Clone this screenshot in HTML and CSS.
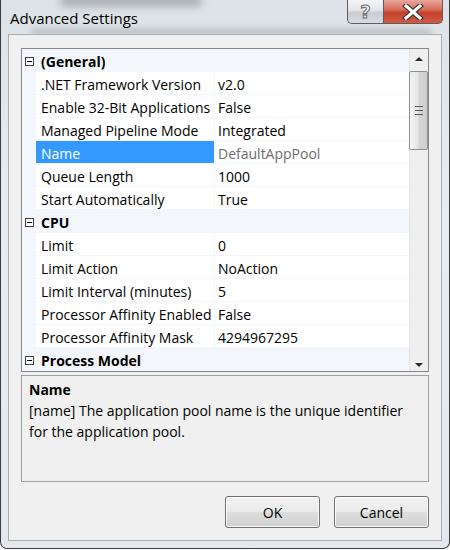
FILE: index.html
```html
<!DOCTYPE html>
<html lang="en">

<head>
    <meta charset="UTF-8">
    <title>Advanced Settings</title>
    <link rel="stylesheet" href="styles.css">
</head>

<body>

    <div class="window">
        <div class="titlebar">
            <span class="title">Advanced Settings</span>
            <div class="caption-buttons">
                <div class="cap-btn help"><span>?</span></div>
                <div class="cap-btn close">
                    <svg width="22" height="16" viewBox="0 0 22 16">
                        <path d="M4 2 L18 14 M18 2 L4 14" stroke="#3a3a3a" stroke-width="5.5" stroke-linecap="square" fill="none" />
                        <path d="M4 2 L18 14 M18 2 L4 14" stroke="#ffffff" stroke-width="3" stroke-linecap="square" fill="none" />
                    </svg>
                </div>
            </div>
        </div>

        <div class="client">
            <div class="grid">
                <div class="rows">
                    <div class="row cat"><span class="gutter"><span class="toggle"></span></span><span class="cat-label">(General)</span></div>
                    <div class="row"><span class="gutter"></span><span class="name">.NET Framework Version</span><span class="value">v2.0</span></div>
                    <div class="row"><span class="gutter"></span><span class="name">Enable 32-Bit Applications</span><span class="value">False</span></div>
                    <div class="row"><span class="gutter"></span><span class="name">Managed Pipeline Mode</span><span class="value">Integrated</span></div>
                    <div class="row selected"><span class="gutter"></span><span class="name">Name</span><span class="value readonly">DefaultAppPool</span></div>
                    <div class="row"><span class="gutter"></span><span class="name">Queue Length</span><span class="value">1000</span></div>
                    <div class="row"><span class="gutter"></span><span class="name">Start Automatically</span><span class="value">True</span></div>
                    <div class="row cat"><span class="gutter"><span class="toggle"></span></span><span class="cat-label">CPU</span></div>
                    <div class="row"><span class="gutter"></span><span class="name">Limit</span><span class="value">0</span></div>
                    <div class="row"><span class="gutter"></span><span class="name">Limit Action</span><span class="value">NoAction</span></div>
                    <div class="row"><span class="gutter"></span><span class="name">Limit Interval (minutes)</span><span class="value">5</span></div>
                    <div class="row"><span class="gutter"></span><span class="name">Processor Affinity Enabled</span><span class="value">False</span></div>
                    <div class="row"><span class="gutter"></span><span class="name">Processor Affinity Mask</span><span class="value">4294967295</span></div>
                    <div class="row cat"><span class="gutter"><span class="toggle"></span></span><span class="cat-label">Process Model</span></div>
                </div>
                <div class="scrollbar">
                    <div class="arrow up"></div>
                    <div class="track">
                        <div class="thumb"><span class="grip"></span></div>
                    </div>
                    <div class="arrow down"></div>
                </div>
            </div>

            <div class="desc">
                <div class="desc-title">Name</div>
                <div class="desc-text">[name] The application pool name is the unique identifier<br>for the application pool.</div>
            </div>

            <div class="buttons">
                <button>OK</button>
                <button>Cancel</button>
            </div>
        </div>
    </div>

</body>

</html>
```

FILE: styles.css
```css
body {
    margin: 0;
    background-color: #ffffff;
    font-family: "Open Sans", "Noto Sans", sans-serif;
    font-size: 14px;
    color: #000;
}

.window {
    position: relative;
    width: 450px;
    height: 549px;
    box-sizing: border-box;
    border: 1px solid #3c3c3c;
    border-top: none;
    border-radius: 0 0 7px 7px;
    background: linear-gradient(180deg, #dde2e7 0%, #e9ecef 40%, #e4e8ec 100%);
    display: flex;
    flex-direction: column;
    overflow: hidden;
}

/* blurred desktop showing through the glass */
.window::before {
    content: "";
    position: absolute;
    left: 60px;
    top: -4px;
    width: 140px;
    height: 10px;
    background: #7d8288;
    filter: blur(4px);
    opacity: 0.6;
}

.window::after {
    content: "";
    position: absolute;
    left: 30px;
    top: 29px;
    width: 400px;
    height: 6px;
    background: #8d9298;
    filter: blur(3px);
    opacity: 0.5;
}

.titlebar {
    position: relative;
    z-index: 1;
    height: 34px;
    display: flex;
    justify-content: space-between;
    align-items: flex-start;
}

.title {
    font-size: 15px;
    padding-left: 9px;
    line-height: 37px;
    color: #000;
}

.caption-buttons {
    display: flex;
    margin-right: 6px;
}

.cap-btn {
    height: 24px;
    box-sizing: border-box;
    border: 1px solid #5c5c5c;
    border-top: none;
    display: flex;
    align-items: center;
    justify-content: center;
}

.help {
    width: 36px;
    border-right: none;
    border-radius: 0 0 0 5px;
    background: linear-gradient(180deg, #f4f5f6 0%, #e2e4e6 45%, #c9ccd0 55%, #d9dcdf 100%);
}

.help span {
    font-family: "DejaVu Sans", sans-serif;
    font-size: 18px;
    font-weight: bold;
    color: #f4f4f4;
    -webkit-text-stroke: 1px #6a6a6a;
    line-height: 22px;
}

.close {
    width: 60px;
    border-radius: 0 0 5px 0;
    background: linear-gradient(180deg, #e8a89c 0%, #d8705f 40%, #c7402b 55%, #d25a43 100%);
}

.client {
    position: relative;
    z-index: 1;
    margin: 0 7px;
    height: 507px;
    box-sizing: border-box;
    border: 1px solid #a9aeb4;
    background-color: #f0f0f0;
    padding: 13px 12px 0 12px;
}

.grid {
    height: 324px;
    box-sizing: border-box;
    border: 1px solid #828790;
    display: flex;
    background-color: #fff;
}

.rows {
    flex: 1;
    display: flex;
    flex-direction: column;
    overflow: hidden;
}

.row {
    display: flex;
    height: 22px;
    border-bottom: 1px solid #f3f6fb;
    line-height: 25px;
    white-space: nowrap;
}

.gutter {
    width: 14px;
    flex-shrink: 0;
    background-color: #f3f6fb;
    position: relative;
}

.name {
    width: 173px;
    flex-shrink: 0;
    padding-left: 5px;
    border-right: 1px solid #f3f6fb;
    overflow: hidden;
}

.value {
    flex: 1;
    padding-left: 3px;
    overflow: hidden;
}

.readonly {
    color: #6d6d6d;
}

.selected .name {
    background-color: #3399ff;
    color: #fff;
}

.cat {
    background-color: #f3f6fb;
}

.cat-label {
    font-weight: bold;
    padding-left: 5px;
    overflow: hidden;
}

.toggle {
    position: absolute;
    left: 3px;
    top: 8px;
    width: 7px;
    height: 7px;
    border: 1px solid #444;
    background-color: #fff;
}

.toggle::after {
    content: "";
    position: absolute;
    left: 1px;
    top: 3px;
    width: 5px;
    height: 1px;
    background-color: #000;
}

.scrollbar {
    width: 19px;
    flex-shrink: 0;
    background-color: #efefef;
    border-left: 1px solid #e4e4e4;
    box-sizing: border-box;
    display: flex;
    flex-direction: column;
}

.arrow {
    height: 18px;
    display: flex;
    align-items: center;
    justify-content: center;
}

.arrow::after {
    content: "";
    width: 0;
    height: 0;
    border-left: 4px solid transparent;
    border-right: 4px solid transparent;
}

.up::after {
    border-bottom: 4px solid #2a2a2a;
    margin-top: 1px;
}

.down::after {
    border-top: 4px solid #2a2a2a;
    margin-top: 5px;
}

.track {
    flex: 1;
    padding-top: 4px;
}

.thumb {
    height: 79px;
    margin: 0 0 0 -1px;
    box-sizing: border-box;
    border: 1px solid #8f8f8f;
    border-radius: 2px;
    background: linear-gradient(90deg, #f4f4f4 0%, #e6e6e6 45%, #d4d4d4 55%, #cfcfcf 100%);
    display: flex;
    align-items: center;
    justify-content: center;
}

.grip {
    width: 8px;
    height: 7px;
    border-top: 1px solid #5a5a5a;
    border-bottom: 1px solid #5a5a5a;
    position: relative;
}

.grip::after {
    content: "";
    position: absolute;
    left: 0;
    top: 3px;
    width: 8px;
    height: 1px;
    background-color: #5a5a5a;
}

.desc {
    margin-top: 3px;
    height: 107px;
    box-sizing: border-box;
    border: 1px solid #a0a0a0;
    padding: 3px 7px;
    line-height: 21px;
    white-space: nowrap;
}

.desc-title {
    font-weight: bold;
}

.buttons {
    display: flex;
    justify-content: flex-end;
    gap: 14px;
    margin-top: 14px;
}

button {
    width: 95px;
    height: 32px;
    font-family: "Open Sans", "Noto Sans", sans-serif;
    font-size: 14px;
    color: #000;
    border: 1px solid #707070;
    border-radius: 3px;
    background: linear-gradient(180deg, #f2f2f2 0%, #ebebeb 48%, #dddddd 52%, #cfcfcf 100%);
    box-shadow: inset 0 0 0 1px #fbfbfb;
    padding: 0;
}
```
